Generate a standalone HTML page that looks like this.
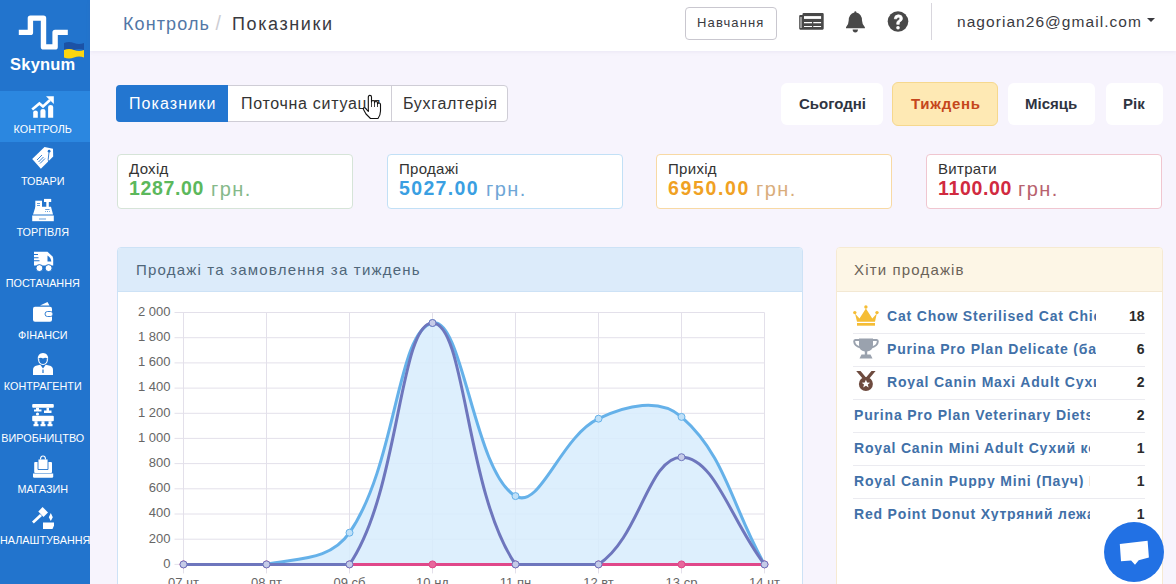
<!DOCTYPE html>
<html><head><meta charset="utf-8">
<style>
*{box-sizing:border-box;margin:0;padding:0}
html,body{width:1176px;height:584px;overflow:hidden}
body{font-family:"Liberation Sans",sans-serif;background:#f7f4fd;position:relative;color:#333}
.abs{position:absolute}
.t{position:absolute;white-space:nowrap;line-height:1}
#side{left:0;top:0;width:90px;height:584px;background:#2274cd}
.nav{position:absolute;left:0;width:90px;height:51px}
.nav.active{background:#2b87e0}
.navt{position:absolute;left:0;width:85.5px;text-align:center;color:#fff;font-size:10.8px;white-space:nowrap;line-height:1}
#top{left:90px;top:0;width:1086px;height:51px;background:#fff;box-shadow:0 1px 4px rgba(110,100,150,.09)}
.crumb{font-size:18px;top:15px;letter-spacing:1.1px}
.btn-learn{left:685px;top:7px;width:92px;height:33px;border:1px solid #c9c7cf;border-radius:4px;background:#fff}
.tabs{left:116px;top:85px;width:392px;height:37px;border:1px solid #cfcdd6;border-radius:4px;background:#fff;overflow:hidden}
.tabsep{position:absolute;top:0;width:1px;height:35px;background:#d0ced6}
.period{top:83px;height:42px;background:#fff;border-radius:6px}
.pt{top:96px;font-size:15px;font-weight:bold;color:#2f3441}
.card{top:154px;width:236px;height:55px;background:#fff;border:1px solid;border-radius:4px}
.cl{font-size:15px;color:#333;top:161px;letter-spacing:0.3px}
.cv{font-size:19.5px;font-weight:bold;top:179px;letter-spacing:0.65px}
.cu{font-size:20px;top:178.5px;letter-spacing:1.4px}
.hrow{font-size:14px;font-weight:bold;color:#4170a8;overflow:hidden;letter-spacing:0.82px}
.hcnt{font-size:14px;font-weight:bold;color:#2b2b2b;text-align:right;width:40px;left:1104.5px}
.hsep{position:absolute;left:853px;width:292px;height:1px;background:#ebebf0}
</style></head><body>
<div id="side" class="abs">
  <div class="nav active" style="top:91px;height:50.5px"></div>
  <svg class="abs" style="left:0;top:0" width="90" height="584" viewBox="0 0 90 584">
<g fill="none" stroke="#fff" stroke-width="5.4" stroke-linejoin="round">
<path d="M18.8 32.4H30.4V18.1H43.5V46.9H55.1V32.4H67.8"/>
</g>
<path d="M64 43 Q69 41 74 43 T84 43 V50 Q79 48 74 50 T64 50Z" fill="#1b52a6"/>
<path d="M64 50 Q69 48 74 50 T84 50 V57.5 Q79 55.5 74 57.5 T64 57.5Z" fill="#fcd60e"/>
<g fill="#fff">
<!-- control: chart up -->
<path d="M33.2 117.7V112.5Q33.2 110.5 35.5 110.5Q37.8 110.5 37.8 112.5V117.7Z"/>
<path d="M40.4 117.7V111Q40.4 109 43 109Q45.5 109 45.5 111V117.7Z"/>
<path d="M48.1 117.7V107Q48.1 104.9 50.6 104.9Q53.2 104.9 53.2 107V117.7Z"/>
<path d="M32.2 109.5L39.4 103.4L43 106.4L50 100" stroke="#fff" stroke-width="2.6" fill="none"/>
<path d="M46 96.2H53.8V104Z"/>
<!-- tag -->
<path d="M32.2 159L44.5 146.9L53 148.7L53.2 156.4L40.9 168.7Z"/>
<circle cx="49.1" cy="151.2" r="1.4" fill="#2274cd"/>
<path d="M37 160L42 155M38.5 162L43.5 157M40 163.5L45 158.5" stroke="#2274cd" stroke-width="0.9"/>
<path d="M49.1 151.5Q47 160 49.6 166.6" stroke="#2274cd" stroke-width="0.9" fill="none"/>
<!-- cash register -->
<path d="M32.2 215.5H53.8V221.2H32.2Z"/>
<path d="M33 214.5L35.5 206.8H51L53 214.5Z"/>
<path d="M35.3 200.7H42V209.4H35.3Z"/>
<path d="M44 198.9H51.2V202H44Z"/>
<path d="M46.3 202H48.8V207H46.3Z"/>
<path d="M39 219H46M37 203.5H40M37 205.5H40M45.2 209.5H49.5M45.2 211.5H46M47 211.5H48M49 211.5H49.8" stroke="#2274cd" stroke-width="0.7"/>
<!-- truck -->
<path d="M34 251.7H47.5L52.5 256.5Q53.2 257.5 53.2 259V265.5H34Z"/>
<path d="M32.7 254.5H38M33 257.7H38.5M34 260.8H39.5" stroke="#2274cd" stroke-width="1.1"/>
<path d="M47.5 255.5V261.5H51.3Q51 257.5 47.5 255.5Z" fill="#2274cd"/>
<circle cx="39.4" cy="268.1" r="3.5" stroke="#2274cd" stroke-width="1"/>
<circle cx="48.6" cy="268.1" r="3.5" stroke="#2274cd" stroke-width="1"/>
<!-- wallet -->
<rect x="33" y="306.8" width="19" height="14.9" rx="2"/>
<path d="M40 305.5L47.5 302L49.5 305.5Z"/>
<rect x="45" y="311.5" width="8" height="5" rx="2.5" stroke="#2274cd" stroke-width="0.9"/>
<!-- person -->
<path d="M37.8 359.5Q37.5 353 43 353Q48.5 353 48.1 359.5L47 358.3Q45 357.3 43 358.6Q41 357.3 39 358.3Z"/>
<path d="M38.7 359V360.5Q39.1 364 43 364.5Q46.9 364 47.3 360.5V359" stroke="#fff" stroke-width="1.1" fill="none"/>
<path d="M33 375V370Q33 366 37 365.5L40.3 364.8L43 368.5L45.7 364.8L49 365.5Q53 366 53 370V375Z"/>
<path d="M42.4 369.5H43.6V373H42.4Z" fill="#2274cd"/>
<!-- factory -->
<rect x="32.2" y="403.9" width="21.6" height="3.8" rx="1"/>
<path d="M36 407.7H39V409.5H41.5V411.5H34V409.5H36Z"/>
<path d="M46.5 407.7H49V410.5H51.5V413H44V410.5H46.5Z"/>
<rect x="32.2" y="415.8" width="21.6" height="5.5" rx="1"/>
<path d="M34.5 421.3H37.5V424H34.5ZM41.5 421.3H44.5V424H41.5ZM48.5 421.3H51.5V424H48.5Z"/>
<path d="M33.5 424H38.5V426.3H33.5ZM40.5 424H45.5V426.3H40.5ZM47.5 424H52.5V426.3H47.5Z"/>
<circle cx="37.5" cy="414" r="1.6"/>
<!-- shop -->
<rect x="34.2" y="462" width="17.8" height="11" rx="1"/>
<path d="M33 473.4H53.2V476.5Q53.2 477.7 52 477.7H34.2Q33 477.7 33 476.5Z"/>
<path d="M38 459H48V469.5H38Z" stroke="#2274cd" stroke-width="0.9"/>
<path d="M40.5 459.5Q40.5 456 43 456Q45.5 456 45.5 459.5" stroke="#fff" stroke-width="1.2" fill="none"/>
<!-- gavel -->
<path d="M38.3 511.5L42.6 507L48 512.5L43.5 517Z"/>
<path d="M40 514L42 516L33.8 523.5L32 521.5Z"/>
<path d="M50.8 513L52.8 517.3L50.8 521L48.8 517.3Z"/>
<path d="M43 522.5H54V525.5L52.5 529H43Z"/>
</g>
</svg>
<div class="navt" style="top:55.5px;font-size:16.5px;font-weight:bold;left:0;width:85.5px;letter-spacing:0.2px">Skynum</div>
<div class="navt" style="top:124px">КОНТРОЛЬ</div>
<div class="navt" style="top:176px">ТОВАРИ</div>
<div class="navt" style="top:227px">ТОРГІВЛЯ</div>
<div class="navt" style="top:278px">ПОСТАЧАННЯ</div>
<div class="navt" style="top:330px">ФІНАНСИ</div>
<div class="navt" style="top:381px">КОНТРАГЕНТИ</div>
<div class="navt" style="top:433px">ВИРОБНИЦТВО</div>
<div class="navt" style="top:484px">МАГАЗИН</div>
<div class="navt" style="top:535px">НАЛАШТУВАННЯ</div>

</div>
<div id="top" class="abs"></div>
<div class="t crumb" style="left:123px;color:#5277a6">Контроль</div>
<div class="t crumb" style="left:215.5px;top:14px;font-size:19.5px;color:#cdcdd3">/</div>
<div class="t crumb" style="left:232px;color:#3a3a3f;letter-spacing:1.6px">Показники</div>
<div class="abs btn-learn"></div>
<div class="t" style="left:697px;top:16px;font-size:13px;color:#3a3a3f;letter-spacing:1.15px">Навчання</div>
<svg class="abs" style="left:790px;top:5px" width="125" height="32" viewBox="790 5 125 32">
<path d="M799.2 16Q799.2 14.9 800.3 14.9H802.5V13.9Q802.5 13.1 803.6 13.1H822.6Q823.7 13.1 823.7 14.2V28.6Q823.7 29.7 822.6 29.7H800.3Q799.2 29.7 799.2 28.6Z" fill="#484848"/>
<path d="M801 17V28" stroke="#fff" stroke-width="0.9"/>
<rect x="804" y="16.1" width="17.1" height="2.8" fill="#fff"/>
<path d="M804 22.6H812M813.3 22.6H821.1M804 26.5H812M813.3 26.5H821.1" stroke="#fff" stroke-width="1.2"/>
<path d="M855.3 11.2Q856.4 11.2 856.4 12.4Q861.9 13.6 862 20.5Q862.2 25 864.9 27.3V28.3H846V27.3Q848.6 25 848.7 20.5Q848.9 13.6 854.3 12.4Q854.3 11.2 855.3 11.2Z" fill="#484848"/>
<path d="M852.6 29.6H858Q857.8 32.5 855.3 32.5Q852.8 32.5 852.6 29.6Z" fill="#484848"/>
<circle cx="898" cy="21.45" r="10.3" fill="#484848"/>
<path d="M894.3 18.8Q894.5 14.8 898.4 14.8Q902.4 14.8 902.5 18.4Q902.5 20.5 900.3 21.7Q899.3 22.3 899.3 23.6V24.3H896.7V23.2Q896.7 21.1 898.6 20.2Q899.8 19.6 899.8 18.6Q899.7 17.2 898.3 17.2Q896.9 17.2 896.8 18.8Z" fill="#fff" stroke="#fff" stroke-width="0.7" stroke-linejoin="round"/>
<circle cx="898" cy="27.8" r="1.8" fill="#fff"/>
</svg>
<div class="abs" style="left:931px;top:3px;width:1px;height:37px;background:#d8d6dd"></div>
<div class="t" style="left:957px;top:14px;font-size:15.5px;color:#3a3a3f;letter-spacing:1.05px">nagorian26@gmail.com</div>
<svg class="abs" style="left:1147px;top:18px" width="9" height="5"><path d="M0 0H8L4 4Z" fill="#3a3a3f"/></svg>

<div class="abs tabs">
  
  <div class="tabsep" style="left:274px"></div>
</div>
<div class="abs" style="left:116px;top:85px;width:112px;height:37px;background:#2376d0;border-radius:4px 0 0 4px"></div>
<div class="t" style="left:129px;top:96px;font-size:16px;color:#fff;letter-spacing:1.1px">Показники</div>
<div class="t" style="left:241px;top:96px;font-size:16px;color:#333;letter-spacing:0.7px">Поточна ситуація</div>
<div class="t" style="left:403px;top:96px;font-size:16px;color:#333;letter-spacing:0.7px">Бухгалтерія</div>

<div class="abs period" style="left:781px;width:102px"></div>
<div class="abs period" style="left:892px;top:82px;height:44px;width:106px;background:#fee9b4;border:1px solid #f6d88e"></div>
<div class="abs period" style="left:1008px;width:87px"></div>
<div class="abs period" style="left:1106px;width:57px"></div>
<div class="t pt" style="left:799px">Сьогодні</div>
<div class="t pt" style="left:911px;color:#c5471c;letter-spacing:0.75px">Тиждень</div>
<div class="t pt" style="left:1025px">Місяць</div>
<div class="t pt" style="left:1123px">Рік</div>

<div class="abs card" style="left:117px;border-color:#d6e4d8"></div>
<div class="abs card" style="left:387px;border-color:#c2e0f6"></div>
<div class="abs card" style="left:656px;border-color:#f8d9a4"></div>
<div class="abs card" style="left:926px;border-color:#f0c6d0"></div>
<div class="t cl" style="left:129px">Дохід</div>
<div class="t cl" style="left:399px">Продажі</div>
<div class="t cl" style="left:668px">Прихід</div>
<div class="t cl" style="left:938px">Витрати</div>
<div class="t cv" style="left:129px;color:#5cb85c">1287.00</div><div class="t cu" style="left:211px;color:#86b98a">грн.</div>
<div class="t cv" style="left:399px;color:#3a9fe2;letter-spacing:1.35px">5027.00</div><div class="t cu" style="left:486px;color:#6fa6d6">грн.</div>
<div class="t cv" style="left:668px;color:#f0a123;letter-spacing:1.65px">6950.00</div><div class="t cu" style="left:756px;color:#d9ad7c">грн.</div>
<div class="t cv" style="left:938px;color:#d12a40">1100.00</div><div class="t cu" style="left:1018px;color:#b8626e">грн.</div>

<div class="abs" style="left:117px;top:247px;width:686px;height:345px;background:#fff;border:1px solid #cde2f6;border-radius:4px"></div>
<div class="abs" style="left:118px;top:248px;width:684px;height:44px;background:#dcebfa;border-bottom:1px solid #cde2f6;border-radius:3px 3px 0 0"></div>
<div class="t" style="left:136px;top:262px;font-size:15px;color:#4f6679;letter-spacing:1.2px">Продажі та замовлення за тиждень</div>
<svg class="abs" style="left:0;top:0" width="1176" height="584" viewBox="0 0 1176 584">
<path d="M174.5 312.5H764.5 M174.5 337.7H764.5 M174.5 362.9H764.5 M174.5 388.1H764.5 M174.5 413.3H764.5 M174.5 438.4H764.5 M174.5 463.6H764.5 M174.5 488.8H764.5 M174.5 514.0H764.5 M174.5 539.2H764.5 M174.5 564.4H764.5 M183.5 312.5V573.4 M266.5 312.5V573.4 M349.5 312.5V573.4 M432.5 312.5V573.4 M515.5 312.5V573.4 M598.5 312.5V573.4 M681.5 312.5V573.4 M764.5 312.5V573.4" stroke="#e3e0ea" stroke-width="1" fill="none"/>
<path d="M183.5 564.4 C216.7 564.4 234.4 564.4 266.5 564.4 C300.8 557.8 330.7 560.0 349.5 532.7 C397.1 463.4 396.6 330.8 432.5 323.0 C463.0 316.2 473.8 472.1 515.5 496.1 C540.2 510.4 560.1 437.0 598.5 418.7 C626.5 405.3 659.6 397.7 681.5 416.9 C726.0 456.0 731.3 505.4 764.5 564.4 L764.5 564.4 L183.5 564.4 Z" fill="rgba(215,236,253,0.86)"/>
<path d="M183.5 564.4 C216.7 564.4 234.4 564.4 266.5 564.4 C300.8 557.8 330.7 560.0 349.5 532.7 C397.1 463.4 396.6 330.8 432.5 323.0 C463.0 316.2 473.8 472.1 515.5 496.1 C540.2 510.4 560.1 437.0 598.5 418.7 C626.5 405.3 659.6 397.7 681.5 416.9 C726.0 456.0 731.3 505.4 764.5 564.4" stroke="#65b1e9" stroke-width="3" fill="none"/>
<circle cx="349.5" cy="532.7" r="3.5" fill="#bfe0f8" stroke="#65b1e9" stroke-width="1"/>
<circle cx="432.5" cy="323.0" r="3.5" fill="#bfe0f8" stroke="#65b1e9" stroke-width="1"/>
<circle cx="515.5" cy="496.1" r="3.5" fill="#bfe0f8" stroke="#65b1e9" stroke-width="1"/>
<circle cx="598.5" cy="418.7" r="3.5" fill="#bfe0f8" stroke="#65b1e9" stroke-width="1"/>
<circle cx="681.5" cy="416.9" r="3.5" fill="#bfe0f8" stroke="#65b1e9" stroke-width="1"/>
<path d="M183.5 564.4H764.5" stroke="#e0488a" stroke-width="3" fill="none"/>
<circle cx="183.5" cy="564.4" r="3.5" fill="#e7679c" stroke="#e0488a" stroke-width="1"/>
<circle cx="266.5" cy="564.4" r="3.5" fill="#e7679c" stroke="#e0488a" stroke-width="1"/>
<circle cx="349.5" cy="564.4" r="3.5" fill="#e7679c" stroke="#e0488a" stroke-width="1"/>
<circle cx="432.5" cy="564.4" r="3.5" fill="#e7679c" stroke="#e0488a" stroke-width="1"/>
<circle cx="515.5" cy="564.4" r="3.5" fill="#e7679c" stroke="#e0488a" stroke-width="1"/>
<circle cx="598.5" cy="564.4" r="3.5" fill="#e7679c" stroke="#e0488a" stroke-width="1"/>
<circle cx="681.5" cy="564.4" r="3.5" fill="#e7679c" stroke="#e0488a" stroke-width="1"/>
<circle cx="764.5" cy="564.4" r="3.5" fill="#e7679c" stroke="#e0488a" stroke-width="1"/>
<path d="M183.5 564.4 C216.7 564.4 233.3 564.4 266.5 564.4 C299.7 564.4 333.2 564.4 349.5 564.4 C399.6 491.5 399.3 323.0 432.5 323.0 C465.7 323.0 465.4 491.5 515.5 564.4 C531.8 564.4 573.3 564.4 598.5 564.4 C639.7 537.8 648.3 457.2 681.5 457.2 C714.7 457.2 731.3 521.5 764.5 564.4" stroke="#6e76bd" stroke-width="3" fill="none"/>
<circle cx="183.5" cy="564.4" r="3.5" fill="#c6cbe8" stroke="#6e76bd" stroke-width="1"/>
<circle cx="266.5" cy="564.4" r="3.5" fill="#c6cbe8" stroke="#6e76bd" stroke-width="1"/>
<circle cx="349.5" cy="564.4" r="3.5" fill="#c6cbe8" stroke="#6e76bd" stroke-width="1"/>
<circle cx="432.5" cy="323.0" r="3.5" fill="#c6cbe8" stroke="#6e76bd" stroke-width="1"/>
<circle cx="515.5" cy="564.4" r="3.5" fill="#c6cbe8" stroke="#6e76bd" stroke-width="1"/>
<circle cx="598.5" cy="564.4" r="3.5" fill="#c6cbe8" stroke="#6e76bd" stroke-width="1"/>
<circle cx="681.5" cy="457.2" r="3.5" fill="#c6cbe8" stroke="#6e76bd" stroke-width="1"/>
<circle cx="764.5" cy="564.4" r="3.5" fill="#c6cbe8" stroke="#6e76bd" stroke-width="1"/>
<text x="170.5" y="315.8" text-anchor="end" font-size="13" fill="#666" font-family="Liberation Sans">2 000</text>
<text x="170.5" y="341.0" text-anchor="end" font-size="13" fill="#666" font-family="Liberation Sans">1 800</text>
<text x="170.5" y="366.2" text-anchor="end" font-size="13" fill="#666" font-family="Liberation Sans">1 600</text>
<text x="170.5" y="391.4" text-anchor="end" font-size="13" fill="#666" font-family="Liberation Sans">1 400</text>
<text x="170.5" y="416.6" text-anchor="end" font-size="13" fill="#666" font-family="Liberation Sans">1 200</text>
<text x="170.5" y="441.8" text-anchor="end" font-size="13" fill="#666" font-family="Liberation Sans">1 000</text>
<text x="170.5" y="466.9" text-anchor="end" font-size="13" fill="#666" font-family="Liberation Sans">800</text>
<text x="170.5" y="492.1" text-anchor="end" font-size="13" fill="#666" font-family="Liberation Sans">600</text>
<text x="170.5" y="517.3" text-anchor="end" font-size="13" fill="#666" font-family="Liberation Sans">400</text>
<text x="170.5" y="542.5" text-anchor="end" font-size="13" fill="#666" font-family="Liberation Sans">200</text>
<text x="170.5" y="567.7" text-anchor="end" font-size="13" fill="#666" font-family="Liberation Sans">0</text>
<text x="183.5" y="587" text-anchor="middle" font-size="13" fill="#666" font-family="Liberation Sans">07 чт</text>
<text x="266.5" y="587" text-anchor="middle" font-size="13" fill="#666" font-family="Liberation Sans">08 пт</text>
<text x="349.5" y="587" text-anchor="middle" font-size="13" fill="#666" font-family="Liberation Sans">09 сб</text>
<text x="432.5" y="587" text-anchor="middle" font-size="13" fill="#666" font-family="Liberation Sans">10 нд</text>
<text x="515.5" y="587" text-anchor="middle" font-size="13" fill="#666" font-family="Liberation Sans">11 пн</text>
<text x="598.5" y="587" text-anchor="middle" font-size="13" fill="#666" font-family="Liberation Sans">12 вт</text>
<text x="681.5" y="587" text-anchor="middle" font-size="13" fill="#666" font-family="Liberation Sans">13 ср</text>
<text x="764.5" y="587" text-anchor="middle" font-size="13" fill="#666" font-family="Liberation Sans">14 чт</text>
</svg>

<div class="abs" style="left:836px;top:247px;width:327px;height:345px;background:#fff;border:1px solid #f6ead2;border-radius:4px"></div>
<div class="abs" style="left:837px;top:248px;width:325px;height:44px;background:#fdf6e6;border-bottom:1px solid #f3e8d3;border-radius:3px 3px 0 0"></div>
<div class="t" style="left:854px;top:262px;font-size:15px;color:#6b6358;letter-spacing:1.16px">Хіти продажів</div>

<div class="hsep" style="top:333px"></div>
<div class="hsep" style="top:366px"></div>
<div class="hsep" style="top:399px"></div>
<div class="hsep" style="top:432px"></div>
<div class="hsep" style="top:465px"></div>
<div class="hsep" style="top:498px"></div>
<div class="t hrow" style="left:887px;top:309px;width:209px">Cat Chow Sterilised Cat Chicken</div>
<div class="t hrow" style="left:887px;top:342px;width:209px">Purina Pro Plan Delicate (банка)</div>
<div class="t hrow" style="left:887px;top:375px;width:209px">Royal Canin Maxi Adult Сухий</div>
<div class="t hrow" style="left:854px;top:408px;width:236px">Purina Pro Plan Veterinary Diets</div>
<div class="t hrow" style="left:854px;top:441px;width:236px">Royal Canin Mini Adult Сухий корм</div>
<div class="t hrow" style="left:854px;top:474px;width:236px">Royal Canin Puppy Mini (Пауч) Вологий</div>
<div class="t hrow" style="left:854px;top:507px;width:236px">Red Point Donut Хутряний лежак</div>
<div class="t hcnt" style="top:309px">18</div>
<div class="t hcnt" style="top:342px">6</div>
<div class="t hcnt" style="top:375px">2</div>
<div class="t hcnt" style="top:408px">2</div>
<div class="t hcnt" style="top:441px">1</div>
<div class="t hcnt" style="top:474px">1</div>
<div class="t hcnt" style="top:507px">1</div>


<svg class="abs" style="left:848px;top:300px" width="40" height="95" viewBox="848 300 40 95">
<g fill="#f5bd35">
<path d="M855 313.5L859.5 318.5L865.9 308.5L872.3 318.5L876.8 313.5L875 321.8H857Z"/>
<circle cx="854.8" cy="312.6" r="1.7"/><circle cx="865.9" cy="307" r="1.7"/><circle cx="877" cy="312.6" r="1.7"/>
<rect x="857" y="323" width="18" height="2.7"/>
</g>
<g fill="#9aa2ae">
<path d="M859 338.5H873V345Q873 350.5 867.2 351.5V354.5H870.5L872.5 358.5H859.5L861.5 354.5H864.8V351.5Q859 350.5 859 345Z"/>
<path d="M860 340H855.2Q854.2 340 854.2 341.5Q854.5 346 860.5 347.5" fill="none" stroke="#9aa2ae" stroke-width="2"/>
<path d="M872 340H876.8Q877.8 340 877.8 341.5Q877.5 346 871.5 347.5" fill="none" stroke="#9aa2ae" stroke-width="2"/>
</g>
<g fill="#6e4b3f">
<path d="M856.2 371H860.5L866 377.5L871.5 371H875.6L868.5 379.5H863.5Z"/>
<circle cx="865.9" cy="384" r="7"/>
</g>
<path d="M865.9 379.8L867.1 382.6L870.1 382.7L867.8 384.6L868.6 387.5L865.9 385.8L863.2 387.5L864 384.6L861.7 382.7L864.7 382.6Z" fill="#fff"/>
</svg>
<svg class="abs" style="left:361px;top:94px" width="22" height="26" viewBox="0 0 22 26">
<path d="M7.3 3Q7.3 1.4 8.9 1.4Q10.5 1.4 10.5 3V8Q10.5 6.5 12 6.5Q13.5 6.5 13.5 8V8.8Q13.5 7.5 15 7.5Q16.5 7.5 16.5 9V10Q16.5 9 18 9Q19.5 9 19.5 10.5V17Q19.5 21 17 24.5H9.5Q7.5 22.5 5 20L2.5 15.5Q2 14 3 13.8Q4.2 13.6 5 14.8L7.3 17.5Z" fill="#fff" stroke="#111" stroke-width="1.1" stroke-linejoin="round"/>
<path d="M10.5 8V13M13.5 8.8V13M16.5 10V13" stroke="#111" stroke-width="0.8"/>
</svg>
<div class="abs" style="left:1104px;top:522px;width:60px;height:60px;border-radius:50%;background:#2271e4"></div>
<svg class="abs" style="left:1104px;top:522px" width="60" height="60" viewBox="1104 522 60 60"><path d="M1119.8 543.9L1147.6 540.8L1148.9 557.5L1138.7 560.3L1135 564.7L1131.1 560.4L1121 561.3Z" fill="#fff"/></svg>
</body></html>
